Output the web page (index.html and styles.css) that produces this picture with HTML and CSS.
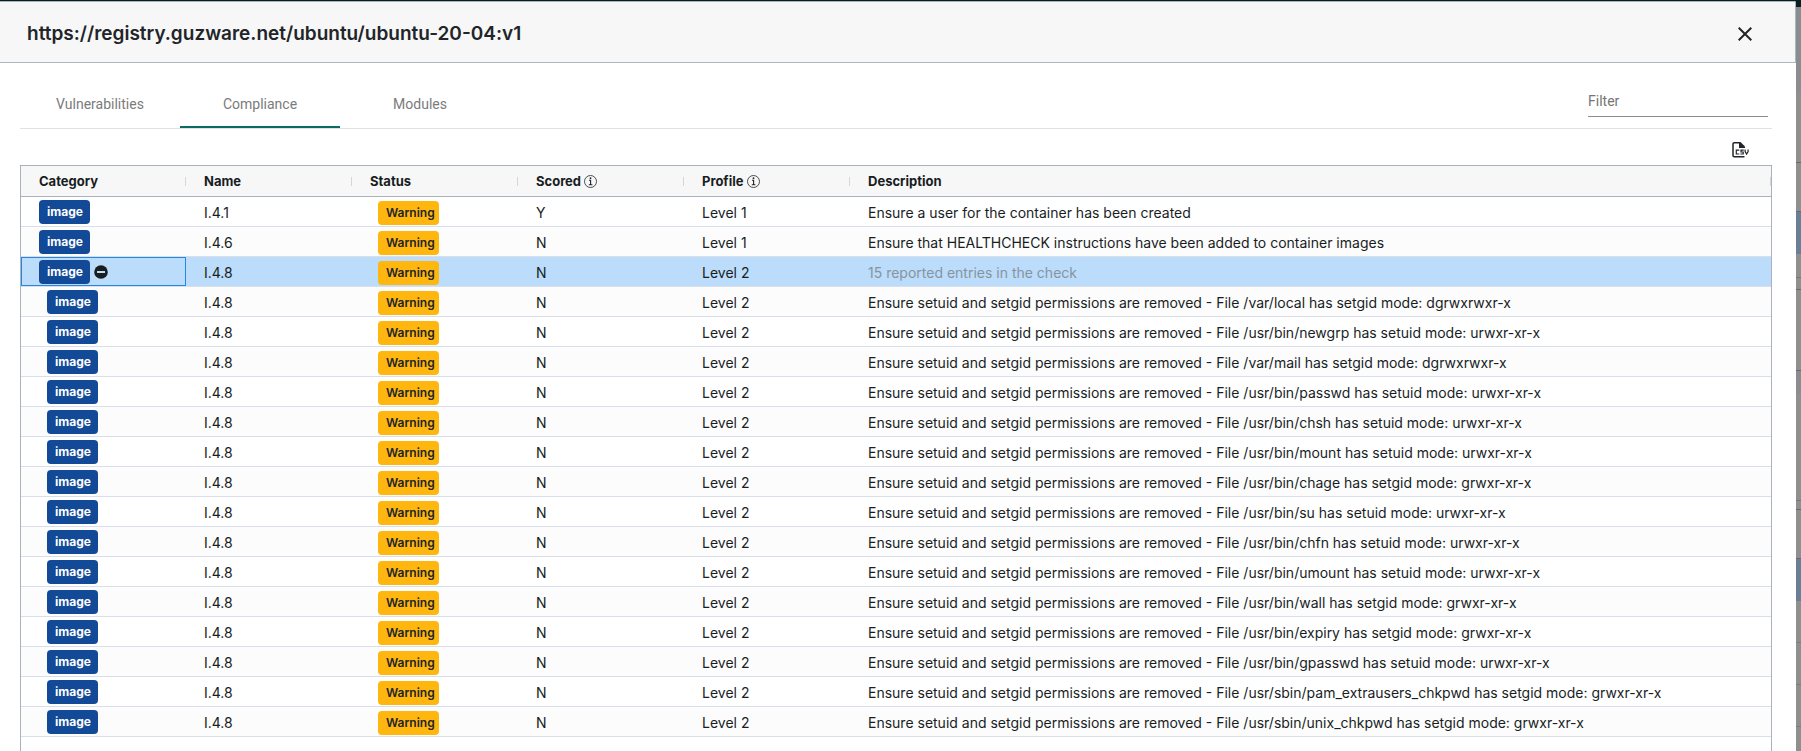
FILE: index.html
```html
<!DOCTYPE html>
<html lang="en">
<head>
<meta charset="utf-8">
<title>Compliance</title>
<link rel="stylesheet" href="styles.css">
</head>
<body>
<div class="screen">
<main class="panel">
  <header class="panel-header">
    <h1 class="title">https://registry.guzware.net/ubuntu/ubuntu-20-04:v1</h1>
    <button class="icon-button" type="button" aria-label="Close">
      <svg width="14" height="14" viewBox="0 0 14 14"><path d="M0.7 0.7L13.3 13.3M13.3 0.7L0.7 13.3" stroke="#212529" stroke-width="2" fill="none"/></svg>
    </button>
  </header>
  <div class="content">
    <div class="toolbar">
      <nav class="tabs" role="tablist">
        <button class="tab" role="tab" type="button">Vulnerabilities</button>
        <button class="tab tab-active" role="tab" type="button" aria-selected="true">Compliance</button>
        <button class="tab" role="tab" type="button">Modules</button>
      </nav>
      <input class="filter" type="text" placeholder="Filter" aria-label="Filter">
    </div>
    <div class="actions">
      <button class="icon-button" type="button" aria-label="Export CSV">
        <svg width="17" height="16" viewBox="0 0 17 16"><path d="M8 .8H2.200Q1 .8 1 2V13.500Q1 14.700 2.200 14.700H12.500" fill="none" stroke="#212529" stroke-width="1.500"/><path d="M7 0H8.500L13 4.500V6H7z" fill="#212529"/><path d="M7.300 8.100H4.300V12H7.300M11.700 8.100H9V10H11.200V12H8.400M13.100 7.500V9.600L14.600 12L16.100 9.600V7.500" fill="none" stroke="#212529" stroke-width="1.200"/></svg>
      </button>
    </div>
    <div class="grid">
      <table class="table">
        <colgroup><col class="col-first"><col class="col"><col class="col"><col class="col"><col class="col"><col></colgroup>
        <thead><tr>
          <th>Category</th><th>Name</th><th>Status</th>
          <th>Scored <svg class="info" width="13" height="13" viewBox="0 0 13 13"><circle cx="6.500" cy="6.500" r="6" fill="none" stroke="#212529" stroke-width="0.800"/><path d="M5 5.300H6.600V9.500M4.800 9.700H8.400" fill="none" stroke="#212529" stroke-width="1.100"/><circle cx="6.500" cy="3.200" r="0.900" fill="#212529"/></svg></th>
          <th>Profile <svg class="info" width="13" height="13" viewBox="0 0 13 13"><circle cx="6.500" cy="6.500" r="6" fill="none" stroke="#212529" stroke-width="0.800"/><path d="M5 5.300H6.600V9.500M4.800 9.700H8.400" fill="none" stroke="#212529" stroke-width="1.100"/><circle cx="6.500" cy="3.200" r="0.900" fill="#212529"/></svg></th>
          <th>Description</th>
        </tr></thead>
        <tbody id="rows"></tbody>
      </table>
    </div>
  </div>
</main>
<div class="backdrop"></div>
</div>
<script src="rows.js"></script>
</body>
</html>
```
FILE: rows.js
```js
const files = [
  ["/var/local", "setgid", "dgrwxrwxr-x"],
  ["/usr/bin/newgrp", "setuid", "urwxr-xr-x"],
  ["/var/mail", "setgid", "dgrwxrwxr-x"],
  ["/usr/bin/passwd", "setuid", "urwxr-xr-x"],
  ["/usr/bin/chsh", "setuid", "urwxr-xr-x"],
  ["/usr/bin/mount", "setuid", "urwxr-xr-x"],
  ["/usr/bin/chage", "setgid", "grwxr-xr-x"],
  ["/usr/bin/su", "setuid", "urwxr-xr-x"],
  ["/usr/bin/chfn", "setuid", "urwxr-xr-x"],
  ["/usr/bin/umount", "setuid", "urwxr-xr-x"],
  ["/usr/bin/wall", "setgid", "grwxr-xr-x"],
  ["/usr/bin/expiry", "setgid", "grwxr-xr-x"],
  ["/usr/bin/gpasswd", "setuid", "urwxr-xr-x"],
  ["/usr/sbin/pam_extrausers_chkpwd", "setgid", "grwxr-xr-x"],
  ["/usr/sbin/unix_chkpwd", "setgid", "grwxr-xr-x"]
];
const rows = [
  { name: "I.4.1", scored: "Y", level: 1, text: "Ensure a user for the container has been created" },
  { name: "I.4.6", scored: "N", level: 1, text: "Ensure that HEALTHCHECK instructions have been added to container images" },
  { name: "I.4.8", scored: "N", level: 2, text: "15 reported entries in the check", kind: "selected" },
  ...files.map(([path, bit, mode]) => ({
    name: "I.4.8", scored: "N", level: 2, kind: "child",
    text: `Ensure setuid and setgid permissions are removed - File ${path} has ${bit} mode: ${mode}`
  }))
];
const collapse = `<button class="icon-button collapse" type="button" aria-label="Collapse"><svg width="14" height="14" viewBox="0 0 14 14"><circle cx="7" cy="7" r="6.800" fill="#181d1f"/><path d="M3 7H11" stroke="#bbdefb" stroke-width="2"/></svg></button>`;
document.getElementById("rows").innerHTML = rows.map(r => `
<tr class="${r.kind || ""}">
<td><div class="category"><span class="badge badge-image">image</span>${r.kind === "selected" ? collapse : ""}</div></td>
<td>${r.name}</td>
<td><div class="status"><span class="badge badge-warning">Warning</span></div></td>
<td>${r.scored}</td><td>Level ${r.level}</td><td class="description">${r.text}</td>
</tr>`).join("");
```
FILE: styles.css
```css
* { box-sizing: border-box; }
body { margin: 0; background: #05201f; font-family: Inter, sans-serif; color: #181d1f; }
button, input { font: inherit; color: inherit; border: 0; background: none; padding: 0; margin: 0; }
.screen { display: flex; min-height: 100vh; }
.panel { flex: 1; min-width: 0; margin-top: 1px; background: #fff; display: flex; flex-direction: column; border-top-right-radius: 2px; }
.panel-header { display: flex; align-items: center; justify-content: space-between; height: 62px; padding: 4px 43px 0 27px; background: #f7f7f7; border: 1px solid #adb5bd; border-left: 0; border-top-right-radius: 2px; }
.title { margin: 0; font-size: 19px; font-weight: 600; line-height: 28px; color: #212529; }
.icon-button { display: flex; cursor: pointer; }
.content { flex: 1; display: flex; flex-direction: column; padding: 17px 24px 0 20px; }
.toolbar { display: flex; justify-content: space-between; align-items: flex-start; border-bottom: 1px solid #dee2e6; padding-right: 4px; font-family: Roboto, sans-serif; font-size: 14px; }
.tabs { display: flex; }
.tab { width: 160px; height: 48px; padding-top: 2px; color: #7b7b7b; border-bottom: 2px solid transparent; cursor: pointer; }
.tab-active { border-bottom-color: #0b6b60; }
.filter { width: 180px; height: 37px; padding-top: 5px; border-bottom: 1px solid #8c8c8c; outline: 0; }
.filter::placeholder { color: #757575; opacity: 1; }
.actions { display: flex; justify-content: flex-end; height: 36px; padding: 13px 23px 0 0; }
.grid { flex: 1; border: 1px solid #aab2c0; border-bottom: 0; }
.table { width: 100%; table-layout: fixed; border-collapse: separate; border-spacing: 0; font-size: 14px; }
.col-first { width: 165px; }
.col { width: 166px; }
th { height: 31px; padding: 0 0 0 18px; font-size: 13px; font-weight: 700; text-align: left; border-bottom: 1px solid #aab2c0; background: linear-gradient(#d3d6da, #d3d6da) right center / 1px 9px no-repeat #f7f7f7; }
td { height: 30px; padding: 3px 0 0 18px; line-height: 26px; white-space: nowrap; border-bottom: 1px solid #d9dfea; }
tbody tr:nth-child(even) td { background: #fcfcfc; }
.info { vertical-align: -2px; }
.category, .status { display: flex; align-items: flex-start; height: 26px; }
.category { gap: 4px; }
.status { padding: 1px 0 0 8px; }
.badge { height: 24px; border-radius: 4px; font-size: 12px; line-height: 24px; font-weight: 700; padding: 0 7px 0 8px; }
.badge-image { background: #124a97; color: #fff; }
.badge-warning { background: #ffb70f; color: #212529; font-weight: 600; padding-right: 4px; }
.child .category { padding-left: 8px; }
.collapse { padding-top: 5px; }
.selected td { background: #bbdcfb; }
.selected td:first-child { box-shadow: inset 0 0 0 1px #2488e0; }
.selected .description { color: #87949f; }
.backdrop {
  width: 5px;
  margin-top: 7px;
  background: linear-gradient(
    #8a8d8f 0 85px, #8e908f 85px 155px, #67696c 155px 156px,
    #8e908f 156px 204px, #67696c 204px 205px, #687f95 205px 247px,
    #8e908f 247px 270px, #747678 270px 271px, #8e908f 271px 282px, #67696c 282px 283px,
    #8e908f 283px 363px, #67696c 363px 364px, #8a8d8f 364px 387px,
    #8e908f 387px 493px, #747678 493px 494px, #8e908f 494px 502px, #67696c 502px 503px,
    #8e908f 503px 551px, #67696c 551px 552px, #687f95 552px 594px,
    #8e908f 594px 635px, #7a7d88 635px 636px, #8e908f 636px 677px, #7a7d80 677px 678px,
    #8e908f 678px 719px, #7a7d88 719px 720px, #8e908f 720px);
}
```
